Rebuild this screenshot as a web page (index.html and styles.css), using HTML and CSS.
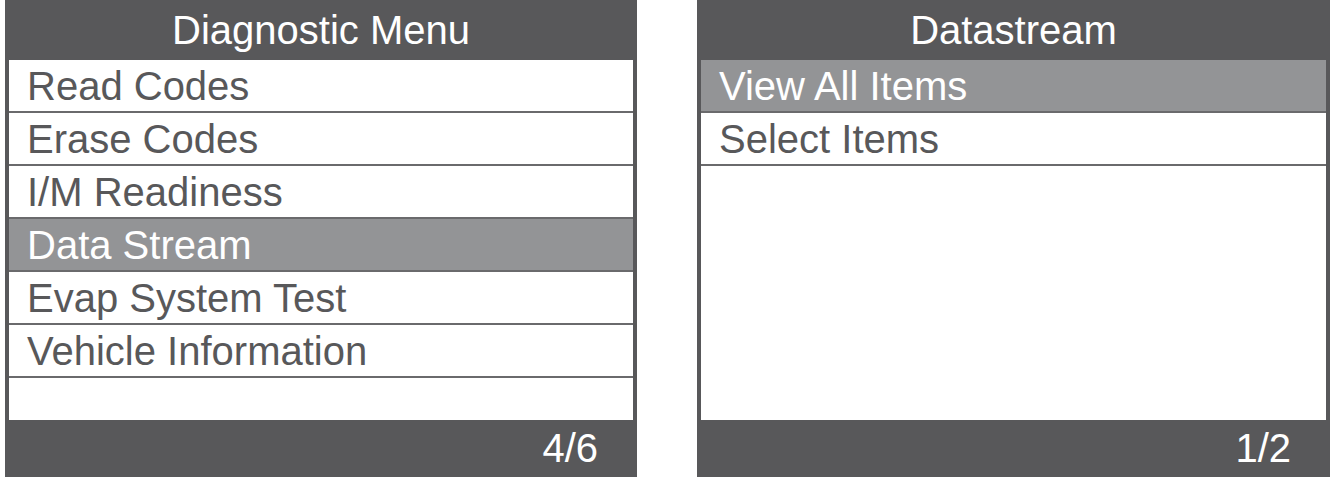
FILE: index.html
```html
<!DOCTYPE html>
<html>
<head>
<meta charset="utf-8">
<link rel="stylesheet" href="styles.css">
</head>
<body>
<div class="screens">
  <div class="panel panel-left">
    <div class="header">Diagnostic Menu</div>
    <div class="list">
      <div class="row">Read Codes</div>
      <div class="row">Erase Codes</div>
      <div class="row">I/M Readiness</div>
      <div class="row selected">Data Stream</div>
      <div class="row">Evap System Test</div>
      <div class="row">Vehicle Information</div>
    </div>
    <div class="footer">4/6</div>
  </div>
  <div class="panel panel-right">
    <div class="header">Datastream</div>
    <div class="list">
      <div class="row selected">View All Items</div>
      <div class="row">Select Items</div>
    </div>
    <div class="footer">1/2</div>
  </div>
</div>
</body>
</html>
```
FILE: styles.css
```css
html, body {
  margin: 0;
  padding: 0;
  background: #ffffff;
}
body {
  font-family: "Liberation Sans", Arial, sans-serif;
}
.screens {
  display: flex;
  gap: 60px;
  padding-left: 5px;
}
.panel {
  display: flex;
  flex-direction: column;
  background: #58585a;
  height: 477px;
}
.panel-left { width: 632px; }
.panel-right { width: 633px; }
.header {
  height: 60px;
  line-height: 60px;
  text-align: center;
  color: #ffffff;
  font-size: 40px;
}
.list {
  height: 360px;
  margin: 0 4px;
  background: #ffffff;
  display: flex;
  flex-direction: column;
}
.row {
  height: 51px;
  line-height: 53px;
  border-bottom: 2px solid #6a6a6c;
  padding-left: 18px;
  color: #58585a;
  font-size: 40px;
  white-space: nowrap;
  overflow: hidden;
}
.row.selected {
  background: #939496;
  color: #ffffff;
}
.footer {
  flex: 1;
  display: flex;
  align-items: center;
  justify-content: flex-end;
  padding-right: 39px;
  color: #ffffff;
  font-size: 40px;
}
```
